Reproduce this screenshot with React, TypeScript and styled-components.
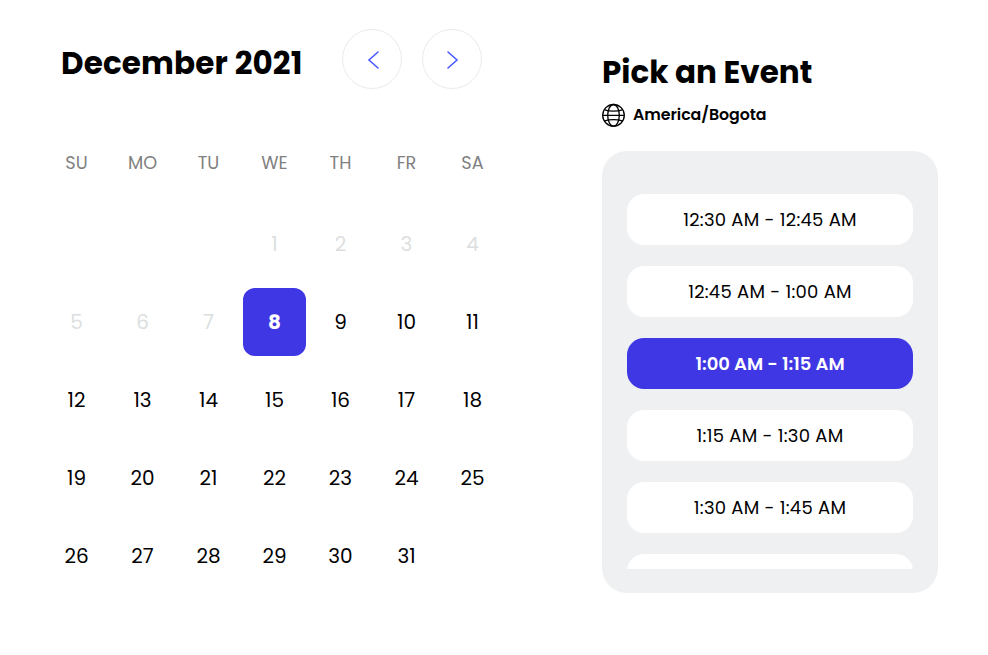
import React from "react";
import styled, { createGlobalStyle, css } from "styled-components";

const GlobalStyle = createGlobalStyle`
  *, *::before, *::after { box-sizing: border-box; }
  body {
    margin: 0;
    background: #fff;
    color: #000;
    font-family: Poppins, Inter, "Liberation Sans", sans-serif;
  }
  button { font: inherit; color: inherit; border: 0; padding: 0; background: none; }
`;

const Page = styled.main`
  display: flex;
  align-items: flex-start;
  gap: 98px;
  width: 988px;
  height: 655px;
  padding-left: 45px;
  overflow: hidden;
`;

const Calendar = styled.section`
  width: 459px;
  padding-top: 29px;
`;

const CalendarHeader = styled.header`
  display: flex;
  align-items: center;
  gap: 20px;
  height: 60px;
  padding-left: 16px;
`;

const MonthTitle = styled.h1`
  width: 261px;
  margin: 8px 0 0;
  font-size: 31px;
  line-height: 36px;
  font-weight: 700;
  letter-spacing: 0.15px;
  white-space: nowrap;
`;

const ArrowButton = styled.button`
  display: flex;
  flex: none;
  align-items: center;
  justify-content: center;
  width: 60px;
  height: 60px;
  border: 1px solid #ebebeb;
  border-radius: 50%;
`;

const Weekdays = styled.div`
  display: grid;
  grid-template-columns: repeat(7, 63px);
  column-gap: 3px;
  margin-top: 62px;
`;

const Weekday = styled.span`
  text-align: center;
  font-size: 17.7px;
  line-height: 24px;
  color: #808080;
`;

const Days = styled.div`
  display: grid;
  grid-template-columns: repeat(7, 63px);
  grid-auto-rows: 68px;
  gap: 10px 3px;
  margin-top: 35px;
`;

const Day = styled.button<{ $state: "past" | "open" | "selected"; $column?: number }>`
  grid-column: ${(p) => p.$column ?? "auto"};
  border-radius: 12px;
  font-size: 20px;
  line-height: 68px;
  font-weight: 400;
  text-align: center;
  ${(p) => p.$state === "past" && css`color: #dcdfe0;`}
  ${(p) =>
    p.$state === "selected" &&
    css`
      background: #3f37e4;
      color: #fff;
      font-weight: 700;
    `}
`;

const Events = styled.section`
  width: 336px;
  padding-top: 54px;
`;

const EventsTitle = styled.h2`
  margin: 0;
  font-size: 31px;
  line-height: 36px;
  font-weight: 700;
  white-space: nowrap;
`;

const Timezone = styled.div`
  display: flex;
  align-items: center;
  gap: 7px;
  height: 24px;
  margin-top: 13px;
  font-size: 15.8px;
  font-weight: 600;
  letter-spacing: -0.05px;
`;

const TimezoneName = styled.span`
  margin-top: -1px;
  white-space: nowrap;
`;

const SlotPanel = styled.div`
  height: 442px;
  margin-top: 24px;
  padding: 43px 25px 24px;
  border-radius: 25px;
  background: #eff0f2;
`;

const SlotList = styled.div`
  display: flex;
  flex-direction: column;
  gap: 21px;
  height: 375px;
  overflow: hidden;
`;

const Slot = styled.button<{ $selected?: boolean }>`
  flex: none;
  height: 51px;
  border-radius: 17px;
  background: ${(p) => (p.$selected ? "#3f37e4" : "#fff")};
  color: ${(p) => (p.$selected ? "#fff" : "#000")};
  font-size: 18px;
  font-weight: ${(p) => (p.$selected ? 600 : 400)};
  letter-spacing: ${(p) => (p.$selected ? "-0.03px" : "0.25px")};
  text-align: center;
  white-space: nowrap;
`;

function Chevron({ direction }: { direction: "left" | "right" }) {
  const d = direction === "left" ? "M18.5 4 L9.5 12 L18.5 20" : "M8.5 4 L17.5 12 L8.5 20";
  return (
    <svg width="26" height="24" viewBox="0 0 26 24" fill="none">
      <path d={d} transform="translate(0.5 1)" stroke="#4a5bff" strokeWidth="1.6" strokeLinecap="round" strokeLinejoin="miter" />
    </svg>
  );
}

function Globe() {
  return (
    <svg width="24" height="24" viewBox="0 0 24 24" fill="none" stroke="#000" strokeWidth="1.3">
      <circle cx="11.5" cy="12.3" r="10.8" />
      <ellipse cx="11.5" cy="12.3" rx="5.8" ry="10.8" />
      <path d="M.7 12.3h21.6M2.8 6.8c4.7 1.7 12.7 1.7 17.4 0M2.8 17.8c4.7-1.7 12.7-1.7 17.4 0" />
    </svg>
  );
}

const weekdays = ["SU", "MO", "TU", "WE", "TH", "FR", "SA"];
const days = Array.from({ length: 31 }, (_, i) => i + 1);
const today = 8;
const slots = [
  "12:30 AM - 12:45 AM",
  "12:45 AM - 1:00 AM",
  "1:00 AM - 1:15 AM",
  "1:15 AM - 1:30 AM",
  "1:30 AM - 1:45 AM",
];
const selectedSlot = "1:00 AM - 1:15 AM";

export default function App() {
  return (
    <>
      <GlobalStyle />
      <Page>
        <Calendar>
          <CalendarHeader>
            <MonthTitle>December 2021</MonthTitle>
            <ArrowButton aria-label="Previous month"><Chevron direction="left" /></ArrowButton>
            <ArrowButton aria-label="Next month"><Chevron direction="right" /></ArrowButton>
          </CalendarHeader>
          <Weekdays>
            {weekdays.map((name) => <Weekday key={name}>{name}</Weekday>)}
          </Weekdays>
          <Days>
            {days.map((day) => (
              <Day
                key={day}
                $column={day === 1 ? 4 : undefined}
                $state={day < today ? "past" : day === today ? "selected" : "open"}
              >
                {day}
              </Day>
            ))}
          </Days>
        </Calendar>
        <Events>
          <EventsTitle>Pick an Event</EventsTitle>
          <Timezone>
            <Globe />
            <TimezoneName>America/Bogota</TimezoneName>
          </Timezone>
          <SlotPanel>
            <SlotList>
              {slots.map((slot) => (
                <Slot key={slot} $selected={slot === selectedSlot}>{slot}</Slot>
              ))}
              <Slot aria-label="More times" />
            </SlotList>
          </SlotPanel>
        </Events>
      </Page>
    </>
  );
}
